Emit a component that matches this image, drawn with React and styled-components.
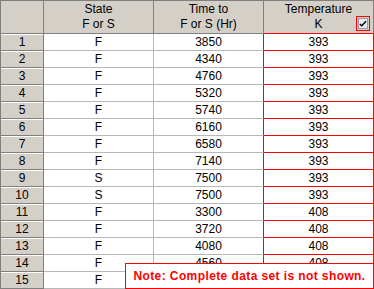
import React from 'react';
import styled, { createGlobalStyle } from 'styled-components';

// the last row sits under the note, so its values are not shown
const rows = [
  ['F', 3850, 393],
  ['F', 4340, 393],
  ['F', 4760, 393],
  ['F', 5320, 393],
  ['F', 5740, 393],
  ['F', 6160, 393],
  ['F', 6580, 393],
  ['F', 7140, 393],
  ['S', 7500, 393],
  ['S', 7500, 393],
  ['F', 3300, 408],
  ['F', 3720, 408],
  ['F', 4080, 408],
  ['F', 4560, 408],
  ['F', '', ''],
];

export default function App() {
  return (
    <>
      <GlobalStyle />
      <Grid>
        <HeaderCell />
        <HeaderCell>State<br />F or S</HeaderCell>
        <HeaderCell>Time to<br />F or S (Hr)</HeaderCell>
        <HeaderCell $red>
          Temperature<br />K
          <CheckFrame>
            <CheckBox>
              <svg width="9" height="8" viewBox="0 0 9 8">
                <path d="M1 4 L3 6 L8 1" fill="none" stroke="#000" strokeWidth="1.6" />
              </svg>
            </CheckBox>
          </CheckFrame>
        </HeaderCell>
        {rows.map(([state, time, temp], i) => (
          <React.Fragment key={i}>
            <RowNumber>{i + 1}</RowNumber>
            <Cell>{state}</Cell>
            <Cell $redRight>{time}</Cell>
            <TempCell>{temp}</TempCell>
          </React.Fragment>
        ))}
        <Note>Note: Complete data set is not shown.</Note>
      </Grid>
    </>
  );
}

const GlobalStyle = createGlobalStyle`
  html, body {
    margin: 0;
    padding: 0;
    background: #ffffff;
    overflow: hidden;
  }
`;

const Grid = styled.div`
  position: relative;
  display: grid;
  grid-template-columns: 43px 110px 110px 110px;
  grid-template-rows: 33px repeat(15, 17px);
  width: 373px;
  border-top: 1px solid #808080;
  border-left: 1px solid #808080;
  font-family: 'Liberation Sans', Arial, sans-serif;
  font-size: 12px;
  color: #000;
  background: #fff;
`;

const HeaderCell = styled.div`
  position: relative;
  box-sizing: border-box;
  background: #d4d0c8;
  border-right: 1px solid #808080;
  border-bottom: 1px solid ${(p) => (p.$red ? '#ff0000' : '#808080')};
  text-align: center;
  line-height: 15px;
  padding-top: 1px;
`;

const CheckFrame = styled.div`
  position: absolute;
  right: 3px;
  top: 15px;
  width: 14px;
  height: 15px;
  box-sizing: border-box;
  border: 1px solid #ff0000;
  display: flex;
  align-items: center;
  justify-content: center;
`;

const CheckBox = styled.div`
  width: 10px;
  height: 11px;
  box-sizing: border-box;
  background: #eceaf2;
  border: 1px solid #9a9aa8;
  display: flex;
  align-items: center;
  justify-content: center;
`;

const RowNumber = styled.div`
  box-sizing: border-box;
  background: #d4d0c8;
  border-right: 1px solid #808080;
  border-bottom: 1px solid #808080;
  box-shadow: inset 0 1px 0 #ffffff;
  text-align: center;
  line-height: 16px;
`;

const Cell = styled.div`
  box-sizing: border-box;
  border-right: 1px solid ${(p) => (p.$redRight ? '#ff0000' : '#b8b8b8')};
  border-bottom: 1px solid #b8b8b8;
  text-align: center;
  line-height: 16px;
`;

const TempCell = styled(Cell)`
  border-right-color: #ff0000;
  border-bottom-color: #ff0000;
`;

const Note = styled.div`
  position: absolute;
  left: 124px;
  top: 262px;
  width: 249px;
  height: 26px;
  box-sizing: border-box;
  background: #fff;
  border: 1px solid #ff0000;
  color: #ff0000;
  font-weight: bold;
  font-size: 12px;
  letter-spacing: 0.4px;
  display: flex;
  align-items: center;
  justify-content: center;
`;
